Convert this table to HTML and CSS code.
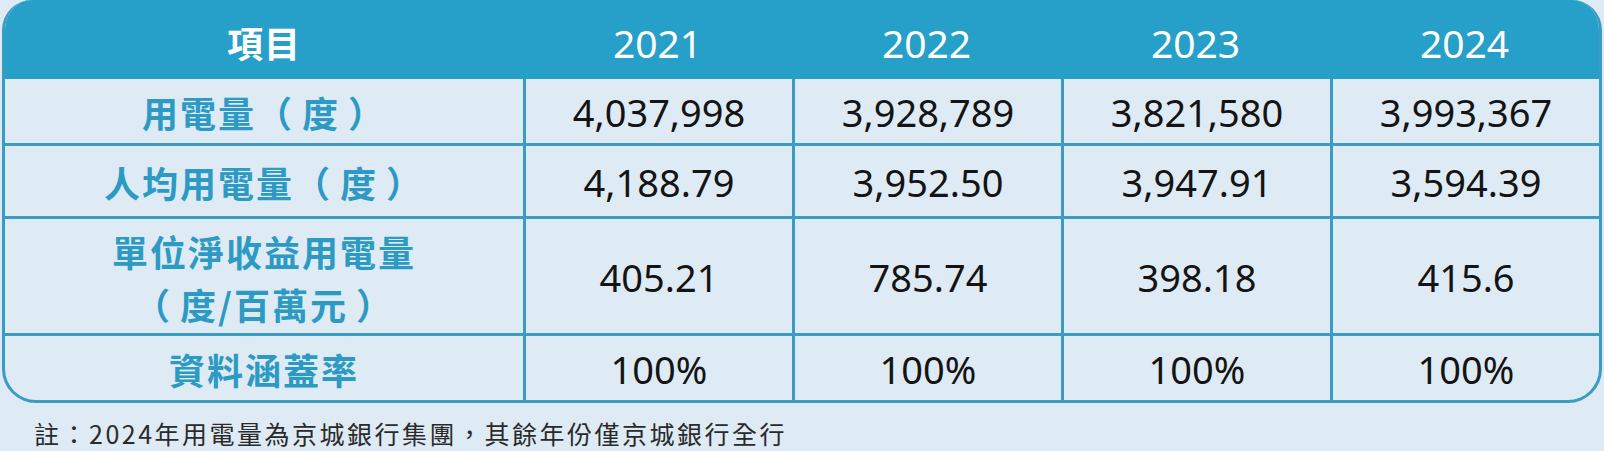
FILE: index.html
```html
<!DOCTYPE html>
<html lang="zh-Hant">
<head>
<meta charset="utf-8">
<title>用電量</title>
<link rel="stylesheet" href="styles.css">
</head>
<body>
<div class="page">
  <div class="table">
    <div class="row head">
      <div class="cell label">項目</div>
      <div class="cell year">2021</div>
      <div class="cell year">2022</div>
      <div class="cell year">2023</div>
      <div class="cell year">2024</div>
    </div>
    <div class="row r1">
      <div class="cell label">用電量（<span class="pad">度</span>）</div>
      <div class="cell num">4,037,998</div>
      <div class="cell num">3,928,789</div>
      <div class="cell num">3,821,580</div>
      <div class="cell num">3,993,367</div>
    </div>
    <div class="row r2">
      <div class="cell label">人均用電量（<span class="pad">度</span>）</div>
      <div class="cell num">4,188.79</div>
      <div class="cell num">3,952.50</div>
      <div class="cell num">3,947.91</div>
      <div class="cell num">3,594.39</div>
    </div>
    <div class="row r3">
      <div class="cell label two">單位淨收益用電量<br>（<span class="pad">度/百萬元</span>）</div>
      <div class="cell num">405.21</div>
      <div class="cell num">785.74</div>
      <div class="cell num">398.18</div>
      <div class="cell num">415.6</div>
    </div>
    <div class="row r4">
      <div class="cell label">資料涵蓋率</div>
      <div class="cell num">100%</div>
      <div class="cell num">100%</div>
      <div class="cell num">100%</div>
      <div class="cell num">100%</div>
    </div>
  </div>
  <p class="note">註：2024年用電量為京城銀行集團，其餘年份僅京城銀行全行</p>
</div>
</body>
</html>
```
FILE: styles.css
```css
html, body {
  margin: 0;
  padding: 0;
  background: #deebf5;
}

.page {
  width: 1604px;
  height: 451px;
  overflow: hidden;
  font-family: "Noto Sans", "Noto Sans CJK TC", sans-serif;
}

.table {
  box-sizing: border-box;
  width: 1600px;
  margin-left: 2px;
  border: 3px solid #3a9cc2;
  border-top: 0;
  border-radius: 30px 30px 34px 34px;
  overflow: hidden;
}

.row {
  display: grid;
  grid-template-columns: 518px repeat(4, 1fr);
}

.cell {
  display: flex;
  align-items: center;
  justify-content: center;
  text-align: center;
}

.label.two {
  display: block;
  padding-top: 6px;
}

.pad {
  padding: 0 8px 0 8px;
}

.head {
  height: 79px;
  background: #269fc9;
  color: #ffffff;
}

.head .cell {
  padding-top: 5px;
  box-sizing: border-box;
}

.head .label {
  font-family: "Noto Sans CJK TC", sans-serif;
  font-weight: 700;
  font-size: 36px;
  letter-spacing: 1px;
  color: #ffffff;
}

.head .year {
  font-size: 39px;
  font-weight: 400;
}

.r1 { height: 64px; }
.r2 { height: 73px; border-top: 3px solid #3a9cc2; box-sizing: border-box; }
.r3 { height: 117px; border-top: 3px solid #3a9cc2; box-sizing: border-box; }
.r4 { height: 67px; border-top: 3px solid #3a9cc2; box-sizing: border-box; }

.label {
  font-family: "Noto Sans CJK TC", sans-serif;
  font-weight: 700;
  font-size: 36px;
  letter-spacing: 2px;
  color: #2d9ac4;
  line-height: 53px;
  padding-top: 3px;
  box-sizing: border-box;
}

.num {
  border-left: 3px solid #3a9cc2;
  font-size: 38px;
  color: #141414;
  padding-top: 2px;
  box-sizing: border-box;
}

.note {
  margin: 14px 0 0 34px;
  font-family: "Noto Sans CJK TC", sans-serif;
  font-size: 25px;
  font-weight: 400;
  letter-spacing: 2.5px;
  line-height: 32px;
  color: #2a2a2a;
}
```
